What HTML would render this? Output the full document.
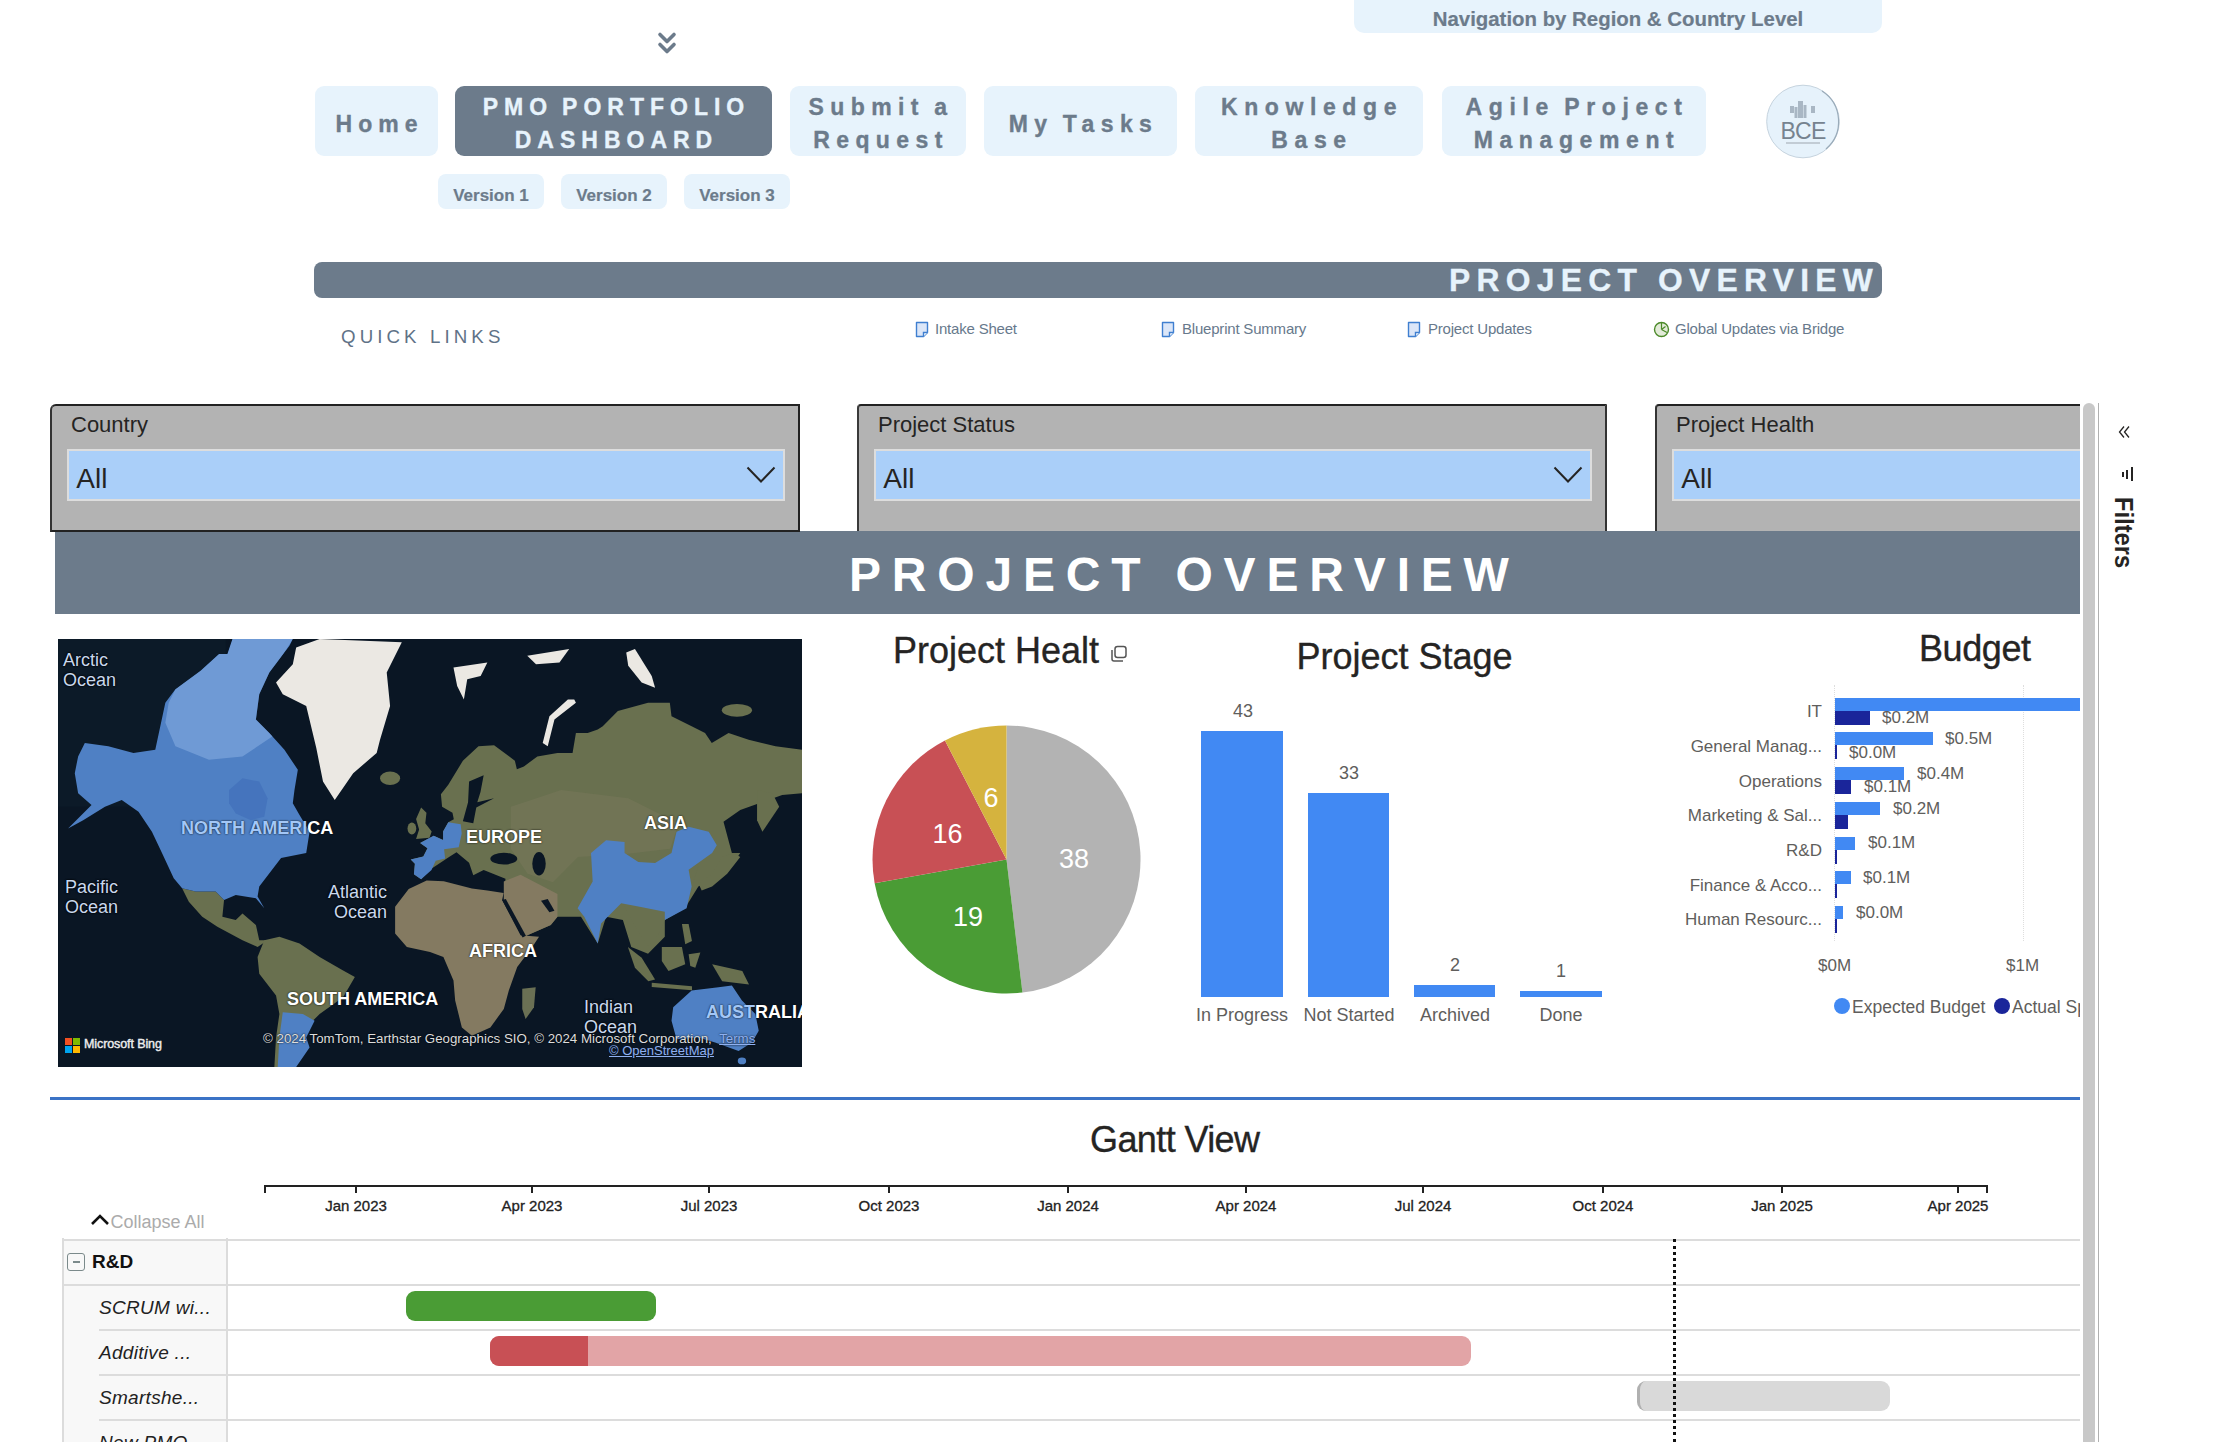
<!DOCTYPE html>
<html><head><meta charset="utf-8">
<style>
*{margin:0;padding:0;box-sizing:border-box}
html,body{width:2218px;height:1442px;overflow:hidden;background:#fff;font-family:"Liberation Sans",sans-serif}
.a{position:absolute}
.nb{position:absolute;background:#e7f3fc;border-radius:9px;color:#6c7b8b;font-weight:bold;display:flex;align-items:center;justify-content:center;text-align:center;line-height:33px}
.sp{letter-spacing:6px;padding-left:6px;padding-top:6px;word-spacing:-3.5px;-webkit-text-stroke:0.35px currentColor}
.ver{position:absolute;top:174px;height:35px;width:106px;background:#e7f3fc;border-radius:8px;color:#6c7b8b;font-weight:bold;font-size:17px;text-align:center;line-height:44px;-webkit-text-stroke:0.2px currentColor}
.ql{position:absolute;top:320px;font-size:15px;letter-spacing:-0.2px;color:#67798c;white-space:nowrap}
.slc{position:absolute;top:404px;height:127px;background:#b3b3b3;border:2px solid #222;border-bottom:2px solid #222}
.slc .t{position:absolute;left:19px;top:6px;font-size:22px;color:#252423}
.slc .in{position:absolute;top:43px;height:52px;background:#aacff9;border:2px solid #ddd}
.slc .v{position:absolute;left:7.3px;top:12px;font-size:28px;color:#252423}
.mp{font-size:18px;color:#c9d8ee;text-shadow:0 0 2px #000,0 0 2px #000}
.mc{font-size:18px;font-weight:bold;color:#fff;white-space:nowrap;text-shadow:0 0 2px #000}
.ttl{font-size:36px;color:#252423;white-space:nowrap;-webkit-text-stroke:0.35px #252423}
.sv{width:82px;text-align:center;font-size:18px;color:#605e5c;margin-top:1px}
.sc{width:140px;text-align:center;font-size:18px;color:#605e5c;margin-top:2px}
.eb{left:235px;height:13px;background:#4189f3}
.ab{left:235px;height:13.5px;background:#1a259a}
.bl{right:258px;font-size:17px;color:#605e5c;white-space:nowrap;text-align:right;margin-top:2px}
.bv{font-size:17px;color:#605e5c;white-space:nowrap;margin-top:1px}
.tk{top:1185px;width:2px;height:8px;background:#222}
.gl{top:1197px;width:100px;text-align:center;font-size:15px;color:#222;-webkit-text-stroke:0.3px #222}
.gn{left:99px;font-size:19px;font-style:italic;color:#222;margin-top:2px;letter-spacing:0.3px}
</style></head><body>

<!-- top nav -->
<div class="a" style="left:1354px;top:-10px;width:528px;height:43px;background:#e7f3fc;border-radius:10px"></div>
<div class="a" style="left:1354px;top:8px;width:528px;text-align:center;font-size:20.4px;font-weight:bold;color:#6c7b8b;-webkit-text-stroke:0.2px currentColor">Navigation by Region &amp; Country Level</div>

<svg class="a" style="left:655px;top:30px" width="24" height="26" viewBox="0 0 24 26"><path d="M5 4.5 L12 11.5 L19 4.5" fill="none" stroke="#6c7b8b" stroke-width="3.6" stroke-linecap="round" stroke-linejoin="round"/><path d="M5 14.5 L12 21.5 L19 14.5" fill="none" stroke="#6c7b8b" stroke-width="3.6" stroke-linecap="round" stroke-linejoin="round"/></svg>

<div class="nb sp" style="left:315px;top:86px;width:123px;height:70px;font-size:23px">Home</div>
<div class="nb sp" style="left:455px;top:86px;width:317px;height:70px;font-size:23px;background:#6c7b8b;color:#e7f3fc">PMO PORTFOLIO<br>DASHBOARD</div>
<div class="nb sp" style="left:790px;top:86px;width:176px;height:70px;font-size:23px;letter-spacing:6.4px">Submit a<br>Request</div>
<div class="nb sp" style="left:984px;top:86px;width:193px;height:70px;font-size:23px;letter-spacing:6.4px">My Tasks</div>
<div class="nb sp" style="left:1195px;top:86px;width:228px;height:70px;font-size:23px;letter-spacing:6.6px">Knowledge<br>Base</div>
<div class="nb sp" style="left:1442px;top:86px;width:264px;height:70px;font-size:23px;letter-spacing:6.6px">Agile Project<br>Management</div>

<svg class="a" style="left:1764px;top:83px" width="78" height="78" viewBox="0 0 78 78"><circle cx="39" cy="38.5" r="36.3" fill="#e6f2fb" stroke="#c5d3de" stroke-width="1"/><path d="M58 8 A36.3 36.3 0 0 1 62 66" fill="none" stroke="#9aabb9" stroke-width="1.2"/>
<g fill="#a9b7c4"><rect x="34" y="18" width="5" height="17"/><rect x="30.5" y="24" width="3" height="11"/><rect x="39.5" y="22" width="3" height="13"/><rect x="26" y="23" width="4" height="7"/><rect x="47" y="23" width="4" height="7"/></g>
<text x="39" y="56" text-anchor="middle" font-family="Liberation Sans" font-size="23" fill="#76838f" letter-spacing="-0.8">BCE</text>
<rect x="22" y="59" width="34" height="2" fill="#c2ccd5"/></svg>

<div class="ver" style="left:438px">Version 1</div>
<div class="ver" style="left:561px">Version 2</div>
<div class="ver" style="left:684px">Version 3</div>

<!-- project overview bar -->
<div class="a" style="left:314px;top:262px;width:1568px;height:36px;background:#6c7b8b;border-radius:8px"></div>
<div class="a" style="left:1449px;top:262px;white-space:nowrap;font-size:31.8px;font-weight:bold;color:#e7f3fc;letter-spacing:6.3px;word-spacing:-0.5px;line-height:36px;-webkit-text-stroke:0.3px currentColor">PROJECT OVERVIEW</div>

<div class="a" style="left:341px;top:326px;font-size:18.7px;color:#5f7287;letter-spacing:4.1px">QUICK LINKS</div>
<svg class="a" style="left:915px;top:321px" width="14" height="17" viewBox="0 0 14 17"><path d="M1.5 1.5 H12.5 V11.5 L8.5 15.5 H1.5 Z" fill="#dbe6f8" stroke="#3f7fd0" stroke-width="1.4" stroke-linejoin="round"/><path d="M12.5 11.5 H8.5 V15.5" fill="#fff" stroke="#3f7fd0" stroke-width="1.4"/></svg>
<svg class="a" style="left:1161px;top:321px" width="14" height="17" viewBox="0 0 14 17"><path d="M1.5 1.5 H12.5 V11.5 L8.5 15.5 H1.5 Z" fill="#dbe6f8" stroke="#3f7fd0" stroke-width="1.4" stroke-linejoin="round"/><path d="M12.5 11.5 H8.5 V15.5" fill="#fff" stroke="#3f7fd0" stroke-width="1.4"/></svg>
<svg class="a" style="left:1407px;top:321px" width="14" height="17" viewBox="0 0 14 17"><path d="M1.5 1.5 H12.5 V11.5 L8.5 15.5 H1.5 Z" fill="#dbe6f8" stroke="#3f7fd0" stroke-width="1.4" stroke-linejoin="round"/><path d="M12.5 11.5 H8.5 V15.5" fill="#fff" stroke="#3f7fd0" stroke-width="1.4"/></svg>
<svg class="a" style="left:1653px;top:321px" width="17" height="17" viewBox="0 0 17 17"><circle cx="8.5" cy="8.5" r="7" fill="#e3ebd9" stroke="#4c8a2a" stroke-width="1.4"/><path d="M8.5 8.5 V2 M8.5 8.5 L12.5 5.5 M8.5 8.5 L14 11.5" stroke="#4c8a2a" stroke-width="1.2" fill="none"/></svg>
<div class="ql" style="left:935px">Intake Sheet</div>
<div class="ql" style="left:1182px">Blueprint Summary</div>
<div class="ql" style="left:1428px">Project Updates</div>
<div class="ql" style="left:1675px">Global Updates via Bridge</div>

<!-- slicers -->
<div class="slc" style="left:50px;width:750px;height:128px;z-index:2;border-radius:6px 0 0 0;border-left-color:#333"><div class="t">Country</div><div class="in" style="left:15px;width:718px"><div class="v">All</div><svg class="a" style="left:677px;top:15px" width="30" height="18" viewBox="0 0 30 18"><path d="M1.5 1.5 L15 15.5 L28.5 1.5" fill="none" stroke="#252423" stroke-width="2"/></svg></div></div>
<div class="slc" style="left:857px;width:750px;border-left-color:#3a3a3a;border-right-color:#333;border-radius:4px 0 0 0;border-bottom:none"><div class="t">Project Status</div><div class="in" style="left:15px;width:718px"><div class="v">All</div><svg class="a" style="left:677px;top:15px" width="30" height="18" viewBox="0 0 30 18"><path d="M1.5 1.5 L15 15.5 L28.5 1.5" fill="none" stroke="#252423" stroke-width="2"/></svg></div></div>
<div class="a" style="left:1650px;top:400px;width:430px;height:140px;overflow:hidden"><div class="slc" style="left:5px;top:4px;width:500px;border-left-color:#333;border-radius:4px 0 0 0;border-bottom:none"><div class="t">Project Health</div><div class="in" style="left:15px;width:480px"><div class="v">All</div></div></div></div>

<!-- banner -->
<div class="a" style="left:55px;top:531px;width:2025px;height:83px;background:#6c7b8b"></div>
<div class="a" style="left:849px;top:533px;white-space:nowrap;font-size:48px;font-weight:bold;color:#fff;letter-spacing:10.8px;line-height:83px">PROJECT OVERVIEW</div>

<!-- map -->
<svg class="a" style="left:58px;top:639px" width="744" height="428" viewBox="0 0 4436 2552" preserveAspectRatio="none">
<defs><clipPath id="na"><path d="M1040,0 L1400,0 L1380,40 L1260,200 L1200,330 L1180,480 L1260,560 L1350,660 L1430,780 L1410,900 L1400,980 L1440,1050 L1500,1150 L1480,1276 L1330,1306 L1200,1476 L1190,1536 L1230,1606 L1180,1546 L1060,1526 L990,1556 L940,1506 L820,1506 L740,1486 L690,1426 L620,1276 L560,1150 L480,1030 L380,960 L280,1000 L150,1080 L60,1130 L200,990 L120,920 L100,800 L120,700 L160,620 L300,640 L450,680 L580,660 L640,380 L700,300 L850,190 L960,90 L1010,90 Z"/></clipPath></defs><rect width="4436" height="2552" fill="#0a1624"/><rect width="1000" height="1000" fill="#0e1e2c" opacity="0.6"/>

<g fill="#69704f">
<path d="M2290,1000 L2283,925 L2327,869 L2414,726 L2507,639 L2600,633 L2724,726 L2736,776 L2778,760 L2858,700 L2978,680 L3068,680 L3088,560 L3158,560 L3218,540 L3248,520 L3338,430 L3518,380 L3648,380 L3658,460 L3778,520 L3858,560 L3898,620 L3998,560 L4118,600 L4278,640 L4436,660 L4436,920 L4318,930 L4068,1020 L3968,1090 L4018,1276 L4068,1276 L3998,1376 L3818,1476 L3738,1606 L3618,1676 L3618,1776 L3518,1876 L3418,1836 L3368,1676 L3268,1656 L3218,1816 L3118,1656 L2978,1656 L2938,1706 L2778,1776 L2658,1566 L2668,1430 L2538,1378 L2476,1409 L2451,1334 L2376,1272 L2327,1303 L2215,1377 L2165,1433 L2122,1402 L2128,1340 L2103,1315 L2178,1297 L2203,1247 L2159,1216 L2240,1173 L2296,1198 L2296,1148 L2327,1092 L2360,1075 L2352,1036 Z"/>
<path d="M4168,900 L4260,920 L4300,1000 L4200,1150 L4168,1080 Z"/>
<path d="M2165,1005 L2197,1036 L2190,1099 L2228,1148 L2215,1185 L2135,1192 L2153,1136 L2135,1074 Z"/><ellipse cx="2110" cy="1130" rx="26" ry="36"/>
<path d="M740,1486 L820,1506 L940,1506 L990,1556 L980,1656 L1060,1676 L1100,1636 L1180,1706 L1200,1796 L1250,1796 L1190,1836 L1100,1796 L950,1716 L860,1656 L780,1566 Z"/>
<path d="M1230,1796 L1320,1776 L1440,1816 L1560,1896 L1700,1976 L1770,2016 L1700,2136 L1560,2236 L1500,2296 L1480,2356 L1420,2426 L1380,2552 L1290,2552 L1300,2376 L1320,2236 L1300,2126 L1200,1996 L1190,1896 Z"/>
<path d="M3718,1376 L3778,1306 L3818,1356 L3778,1476 L3740,1456 Z"/>
<path d="M3818,1456 L3900,1400 L3960,1300 L4030,1276 L4068,1300 L3990,1400 L3900,1476 L3838,1500 Z"/>
<path d="M3368,1576 L3458,1556 L3598,1596 L3618,1676 L3580,1760 L3520,1830 L3470,1760 L3420,1676 Z"/>
<path d="M3398,1836 L3480,1900 L3560,2030 L3520,2040 L3440,1960 Z"/>
<path d="M3540,2050 L3780,2070 L3780,2095 L3540,2075 Z"/>
<path d="M3600,1836 L3720,1836 L3740,1940 L3640,1980 L3600,1920 Z"/>
<path d="M3760,1880 L3830,1870 L3800,1960 L3770,1950 Z"/>
<path d="M3900,1940 L4080,1980 L4120,2060 L3960,2040 Z"/>
<path d="M3720,1700 L3760,1700 L3780,1800 L3740,1820 Z"/>
<ellipse cx="4048" cy="425" rx="90" ry="38"/>
<ellipse cx="1980" cy="830" rx="60" ry="40"/>
</g>
<path d="M2700,1000 L3000,900 L3400,950 L3700,1100 L3650,1250 L3400,1280 L3100,1300 L2950,1450 L2800,1400 L2700,1250 Z" fill="#857f62" opacity="0.3"/>
<g fill="#847a61">
<path d="M2091,1490 L2010,1596 L2010,1756 L2080,1836 L2218,1866 L2298,1896 L2358,2036 L2368,2156 L2408,2316 L2468,2366 L2578,2316 L2658,2206 L2688,2096 L2738,1956 L2828,1836 L2868,1776 L2758,1766 L2648,1556 L2657,1515 L2560,1500 L2468,1488 L2300,1445 L2198,1440 Z"/>
<path d="M2658,1446 L2758,1406 L2978,1520 L2978,1656 L2938,1706 L2778,1776 L2658,1566 Z"/>
<path d="M2768,2086 L2848,2076 L2838,2196 L2788,2266 L2768,2206 Z" fill="#6a7054"/>
</g>
<g fill="#0a1624">
<path d="M2451,850 L2538,813 L2519,912 L2500,974 L2600,950 L2494,1005 L2476,1099 L2414,1086 L2445,974 Z"/>
<ellipse cx="2658" cy="1310" rx="80" ry="35"/>
<ellipse cx="2868" cy="1340" rx="40" ry="70"/>
<path d="M2648,1556 L2670,1550 L2790,1770 L2770,1780 Z"/>
<path d="M2880,1560 L2920,1550 L2960,1620 L2930,1630 Z"/>
</g>
<g fill="#4f80c4">
<path d="M1040,0 L1400,0 L1380,40 L1260,200 L1200,330 L1180,480 L1260,560 L1350,660 L1430,780 L1410,900 L1400,980 L1440,1050 L1500,1150 L1480,1276 L1330,1306 L1200,1476 L1190,1536 L1230,1606 L1180,1546 L1060,1526 L990,1556 L940,1506 L820,1506 L740,1486 L690,1426 L620,1276 L560,1150 L480,1030 L380,960 L280,1000 L150,1080 L60,1130 L200,990 L120,920 L100,800 L120,700 L160,620 L300,640 L450,680 L580,660 L640,380 L700,300 L850,190 L960,90 L1010,90 Z"/>
<path d="M1340,2226 L1460,2236 L1530,2276 L1480,2376 L1500,2436 L1420,2552 L1310,2552 L1320,2376 Z"/>
<path d="M2327,1092 L2401,1105 L2407,1160 L2389,1241 L2302,1253 L2308,1309 L2252,1322 L2227,1378 L2165,1433 L2122,1402 L2128,1340 L2103,1315 L2178,1297 L2203,1247 L2159,1216 L2240,1173 L2296,1198 L2296,1148 Z"/>
<path d="M3268,1200 L3378,1210 L3378,1276 L3460,1330 L3560,1336 L3658,1276 L3688,1150 L3760,1120 L3880,1150 L3928,1230 L3900,1276 L3760,1376 L3778,1476 L3748,1606 L3618,1676 L3618,1626 L3468,1596 L3358,1576 L3238,1696 L3218,1816 L3138,1656 L3098,1606 L3188,1446 L3178,1276 Z"/>
<path d="M3668,2196 L3778,2096 L3938,2076 L4018,2066 L4078,2156 L4158,2236 L4178,2336 L4138,2406 L4058,2456 L3918,2406 L3818,2376 L3688,2386 L3658,2276 Z"/>
<ellipse cx="4078" cy="2516" rx="25" ry="20"/>
</g>
<g fill="#8fb3e6" opacity="0.5" clip-path="url(#na)">
<path d="M1040,0 L1400,0 L1300,160 L1220,330 L1200,470 L1280,580 L1100,700 L900,720 L700,640 L640,500 L660,380 L700,300 L850,190 L960,90 L1010,90 Z"/>
</g>
<path d="M1020,900 L1100,830 L1200,850 L1250,950 L1230,1060 L1150,1080 L1060,1040 L1020,980 Z" fill="#4574bd"/>
<g fill="#ebe8e3">
<path d="M1420,50 L1560,0 L2050,20 L1960,200 L1980,400 L1920,600 L1900,680 L1760,800 L1650,960 L1580,850 L1540,650 L1480,400 L1340,330 L1300,260 L1400,150 Z"/>
<path d="M2358,170 L2560,140 L2520,220 L2440,240 L2420,360 L2380,280 Z"/>
<path d="M2798,100 L3048,60 L2990,140 L2850,150 Z"/>
<path d="M3388,80 L3440,60 L3540,220 L3560,290 L3480,260 L3400,160 Z"/>
<path d="M3078,360 L3088,380 L2960,480 L2920,640 L2890,620 L2930,460 L3040,360 Z"/>
</g>
</svg>
<div class="a mp" style="left:63px;top:650px;line-height:20px">Arctic<br>Ocean</div>
<div class="a mp" style="left:40px;top:877px;line-height:20px;text-align:right;width:78px">Pacific<br>Ocean</div>
<div class="a mp" style="left:300px;top:882px;line-height:20px;text-align:right;width:87px">Atlantic<br>Ocean</div>
<div class="a mp" style="left:584px;top:997px;line-height:20px">Indian<br>Ocean</div>
<div class="a mc" style="left:181px;top:818px"><span style="color:#a3c7f7">NORTH AMERI</span>CA</div>
<div class="a mc" style="left:466px;top:827px">EUROPE</div>
<div class="a mc" style="left:644px;top:813px">ASIA</div>
<div class="a mc" style="left:287px;top:989px">SOUTH AMERICA</div>
<div class="a mc" style="left:469px;top:941px">AFRICA</div>
<div class="a" style="left:58px;top:639px;width:744px;height:428px;overflow:hidden"><div class="a mc" style="left:648px;top:363px"><span style="color:#a3c7f7">AUST</span>RALIA</div></div>
<svg class="a" style="left:65px;top:1038px" width="15" height="15" viewBox="0 0 15 15"><rect x="0" y="0" width="7" height="7" fill="#f25022"/><rect x="8" y="0" width="7" height="7" fill="#7fba00"/><rect x="0" y="8" width="7" height="7" fill="#00a4ef"/><rect x="8" y="8" width="7" height="7" fill="#ffb900"/></svg>
<div class="a" style="left:84px;top:1037px;font-size:12.5px;color:#eee;-webkit-text-stroke:0.4px #eee;letter-spacing:-0.1px">Microsoft Bing</div>
<div class="a" style="left:263px;top:1031px;font-size:13.3px;color:#ddd;white-space:nowrap;text-shadow:0 0 2px #000">© 2024 TomTom, Earthstar Geographics SIO, © 2024 Microsoft Corporation, &nbsp;<u style="color:#8fb0f0">Terms</u></div>
<div class="a" style="left:609px;top:1043px;font-size:13px;color:#8fb0f0;white-space:nowrap"><u>© OpenStreetMap</u></div>
<!-- pie -->
<div class="a ttl" style="left:893px;top:630px">Project Healt</div>
<svg class="a" style="left:1110px;top:645px" width="18" height="18" viewBox="0 0 18 18"><rect x="5" y="1.5" width="11" height="11" rx="2.5" fill="none" stroke="#555" stroke-width="1.5"/><path d="M2 5 L2 14 Q2 16 4 16 L13 16" fill="none" stroke="#555" stroke-width="1.5"/></svg>
<svg class="a" style="left:840px;top:620px" width="320" height="420" viewBox="0 0 320 420">
<path d="M166.5 239.5 L166.50 105.50 A134 134 0 0 1 182.45 372.55 Z" fill="#b3b3b3"/>
<path d="M166.5 239.5 L182.45 372.55 A134 134 0 0 1 34.64 263.35 Z" fill="#4a9c35"/>
<path d="M166.5 239.5 L34.64 263.35 A134 134 0 0 1 104.95 120.47 Z" fill="#c85055"/>
<path d="M166.5 239.5 L104.95 120.47 A134 134 0 0 1 166.50 105.50 Z" fill="#d5b33e"/>
<g font-family="Liberation Sans" font-size="27" fill="#fff" text-anchor="middle">
<text x="234" y="248">38</text><text x="128" y="305.5">19</text><text x="107.5" y="222.5">16</text><text x="151" y="186.5">6</text>
</g>
</svg>

<!-- stage -->
<div class="a ttl" style="left:1296.5px;top:636px">Project Stage</div>
<div class="a" style="left:1201px;top:731px;width:82px;height:266px;background:#4189f3"></div>
<div class="a" style="left:1308px;top:793px;width:81px;height:204px;background:#4189f3"></div>
<div class="a" style="left:1414px;top:985px;width:81px;height:12px;background:#4189f3"></div>
<div class="a" style="left:1520px;top:991px;width:82px;height:6px;background:#4189f3"></div>
<div class="a sv" style="left:1202px;top:700px">43</div>
<div class="a sv" style="left:1308px;top:762px">33</div>
<div class="a sv" style="left:1414px;top:954px">2</div>
<div class="a sv" style="left:1520px;top:960px">1</div>
<div class="a sc" style="left:1172px;top:1003px">In Progress</div>
<div class="a sc" style="left:1279px;top:1003px">Not Started</div>
<div class="a sc" style="left:1385px;top:1003px">Archived</div>
<div class="a sc" style="left:1491px;top:1003px">Done</div>

<!-- budget -->
<div class="a ttl" style="left:1919px;top:627.5px;letter-spacing:-0.4px">Budget</div>
<div class="a" style="left:1600px;top:670px;width:480px;height:360px;overflow:hidden">
 <div class="a" style="left:234px;top:15px;width:0;height:256px;border-left:1.5px dotted #dedede"></div>
 <div class="a" style="left:423px;top:15px;width:0;height:256px;border-left:1.5px dotted #dedede"></div>
 <div class="a eb" style="top:28px;width:300px"></div><div class="a ab" style="top:41px;width:35px"></div>
 <div class="a eb" style="top:62px;width:98px"></div><div class="a ab" style="top:75px;width:2px"></div>
 <div class="a eb" style="top:97px;width:69px"></div><div class="a ab" style="top:110px;width:16px"></div>
 <div class="a eb" style="top:132px;width:45px"></div><div class="a ab" style="top:145px;width:13px"></div>
 <div class="a eb" style="top:167px;width:20px"></div><div class="a ab" style="top:180px;width:2px"></div>
 <div class="a eb" style="top:201px;width:16px"></div><div class="a ab" style="top:214px;width:2px"></div>
 <div class="a eb" style="top:236px;width:8px"></div><div class="a ab" style="top:249px;width:2px"></div>
 <div class="a bl" style="top:30px">IT</div>
 <div class="a bl" style="top:65px">General Manag...</div>
 <div class="a bl" style="top:100px">Operations</div>
 <div class="a bl" style="top:134px">Marketing &amp; Sal...</div>
 <div class="a bl" style="top:169px">R&amp;D</div>
 <div class="a bl" style="top:204px">Finance &amp; Acco...</div>
 <div class="a bl" style="top:238px">Human Resourc...</div>
 <div class="a bv" style="left:282px;top:37px">$0.2M</div>
 <div class="a bv" style="left:345px;top:58px">$0.5M</div>
 <div class="a bv" style="left:249px;top:72px">$0.0M</div>
 <div class="a bv" style="left:317px;top:93px">$0.4M</div>
 <div class="a bv" style="left:264px;top:106px">$0.1M</div>
 <div class="a bv" style="left:293px;top:128px">$0.2M</div>
 <div class="a bv" style="left:268px;top:162px">$0.1M</div>
 <div class="a bv" style="left:263px;top:197px">$0.1M</div>
 <div class="a bv" style="left:256px;top:232px">$0.0M</div>
 <div class="a bv" style="left:218px;top:285px">$0M</div>
 <div class="a bv" style="left:406px;top:285px">$1M</div>
 <div class="a" style="left:234px;top:328px;width:16px;height:16px;border-radius:50%;background:#4189f3"></div>
 <div class="a bv" style="left:252px;top:326px;font-size:17.5px">Expected Budget</div>
 <div class="a" style="left:394px;top:328px;width:16px;height:16px;border-radius:50%;background:#1a259a"></div>
 <div class="a bv" style="left:412px;top:326px;font-size:17.5px">Actual Spend</div>
</div>
<!-- gantt -->
<div class="a" style="left:50px;top:1097px;width:2030px;height:3px;background:#3b73c6"></div>
<div class="a ttl" style="left:1090px;top:1119px;letter-spacing:-0.6px">Gantt View</div>
<div class="a" style="left:264px;top:1185px;width:1723px;height:2px;background:#222"></div>
<div class="a tk" style="left:264px"></div><div class="a tk" style="left:1986px"></div>
<div class="a tk" style="left:355px"></div><div class="a tk" style="left:531px"></div><div class="a tk" style="left:708px"></div><div class="a tk" style="left:888px"></div><div class="a tk" style="left:1067px"></div><div class="a tk" style="left:1245px"></div><div class="a tk" style="left:1422px"></div><div class="a tk" style="left:1602px"></div><div class="a tk" style="left:1781px"></div><div class="a tk" style="left:1957px"></div>
<div class="a gl" style="left:306px">Jan 2023</div>
<div class="a gl" style="left:482px">Apr 2023</div>
<div class="a gl" style="left:659px">Jul 2023</div>
<div class="a gl" style="left:839px">Oct 2023</div>
<div class="a gl" style="left:1018px">Jan 2024</div>
<div class="a gl" style="left:1196px">Apr 2024</div>
<div class="a gl" style="left:1373px">Jul 2024</div>
<div class="a gl" style="left:1553px">Oct 2024</div>
<div class="a gl" style="left:1732px">Jan 2025</div>
<div class="a gl" style="left:1908px">Apr 2025</div>
<svg class="a" style="left:90px;top:1213px" width="20" height="14" viewBox="0 0 20 14"><path d="M2 11 L10 3 L18 11" fill="none" stroke="#111" stroke-width="2.6"/></svg>
<div class="a" style="left:110.5px;top:1212px;font-size:18px;color:#ababab">Collapse All</div>
<div class="a" style="left:63px;top:1239px;width:164px;height:203px;background:#f8f8f8"></div>
<div class="a" style="left:62px;top:1238.5px;width:2018px;height:2px;background:#dcdcdc"></div>
<div class="a" style="left:62px;top:1238px;width:2px;height:204px;background:#dcdcdc"></div>
<div class="a" style="left:226px;top:1238px;width:2px;height:204px;background:#dcdcdc"></div>
<div class="a" style="left:62px;top:1284px;width:2018px;height:2px;background:#dcdcdc"></div>
<div class="a" style="left:99px;top:1329px;width:1981px;height:2px;background:#dcdcdc"></div>
<div class="a" style="left:99px;top:1374px;width:1981px;height:2px;background:#dcdcdc"></div>
<div class="a" style="left:99px;top:1419px;width:1981px;height:2px;background:#dcdcdc"></div>
<div class="a" style="left:67px;top:1253px;width:18px;height:18px;border:1.5px solid #7b8a8b;border-radius:3px"></div>
<div class="a" style="left:72.5px;top:1261px;width:7px;height:1.5px;background:#7b8a8b"></div>
<div class="a" style="left:92px;top:1251px;font-size:19px;font-weight:bold;color:#111">R&amp;D</div>
<div class="a gn" style="top:1295px">SCRUM wi...</div>
<div class="a gn" style="top:1340px">Additive ...</div>
<div class="a gn" style="top:1385px">Smartshe...</div>
<div class="a gn" style="top:1430px">New PMO...</div>
<div class="a" style="left:406px;top:1291px;width:250px;height:30px;background:#4a9c35;border-radius:9px"></div>
<div class="a" style="left:490px;top:1336px;width:981px;height:30px;background:#e2a4a6;border-radius:9px"></div>
<div class="a" style="left:490px;top:1336px;width:98px;height:30px;background:#c85055;border-radius:9px 0 0 9px"></div>
<div class="a" style="left:1637px;top:1381px;width:253px;height:30px;background:#d9d9d9;border-radius:9px;border-left:3px solid #b0b0b0"></div>
<div class="a" style="left:1673px;top:1239px;width:0;height:203px;border-left:3px dotted #111"></div>

<!-- scrollbar & filters -->
<div class="a" style="left:2083px;top:403px;width:12px;height:1050px;background:#c8c8c8;border-radius:6px"></div>
<div class="a" style="left:2098px;top:403px;width:1.3px;height:1039px;background:#b0b0b0"></div>
<svg class="a" style="left:2118px;top:425px" width="12" height="14" viewBox="0 0 12 14"><path d="M6 1.5 L1.5 7 L6 12.5 M11 1.5 L6.5 7 L11 12.5" fill="none" stroke="#252423" stroke-width="1.3"/></svg>
<div class="a" style="left:2122px;top:472px;width:2px;height:5px;background:#252423"></div><div class="a" style="left:2126px;top:470px;width:2px;height:9px;background:#252423"></div><div class="a" style="left:2131px;top:467px;width:2px;height:14px;background:#252423"></div>
<div class="a" style="left:2137px;top:497px;transform-origin:0 0;transform:rotate(90deg) scaleX(0.93);font-size:25.5px;font-weight:bold;color:#252423;white-space:nowrap;line-height:26px">Filters</div>

</body></html>
